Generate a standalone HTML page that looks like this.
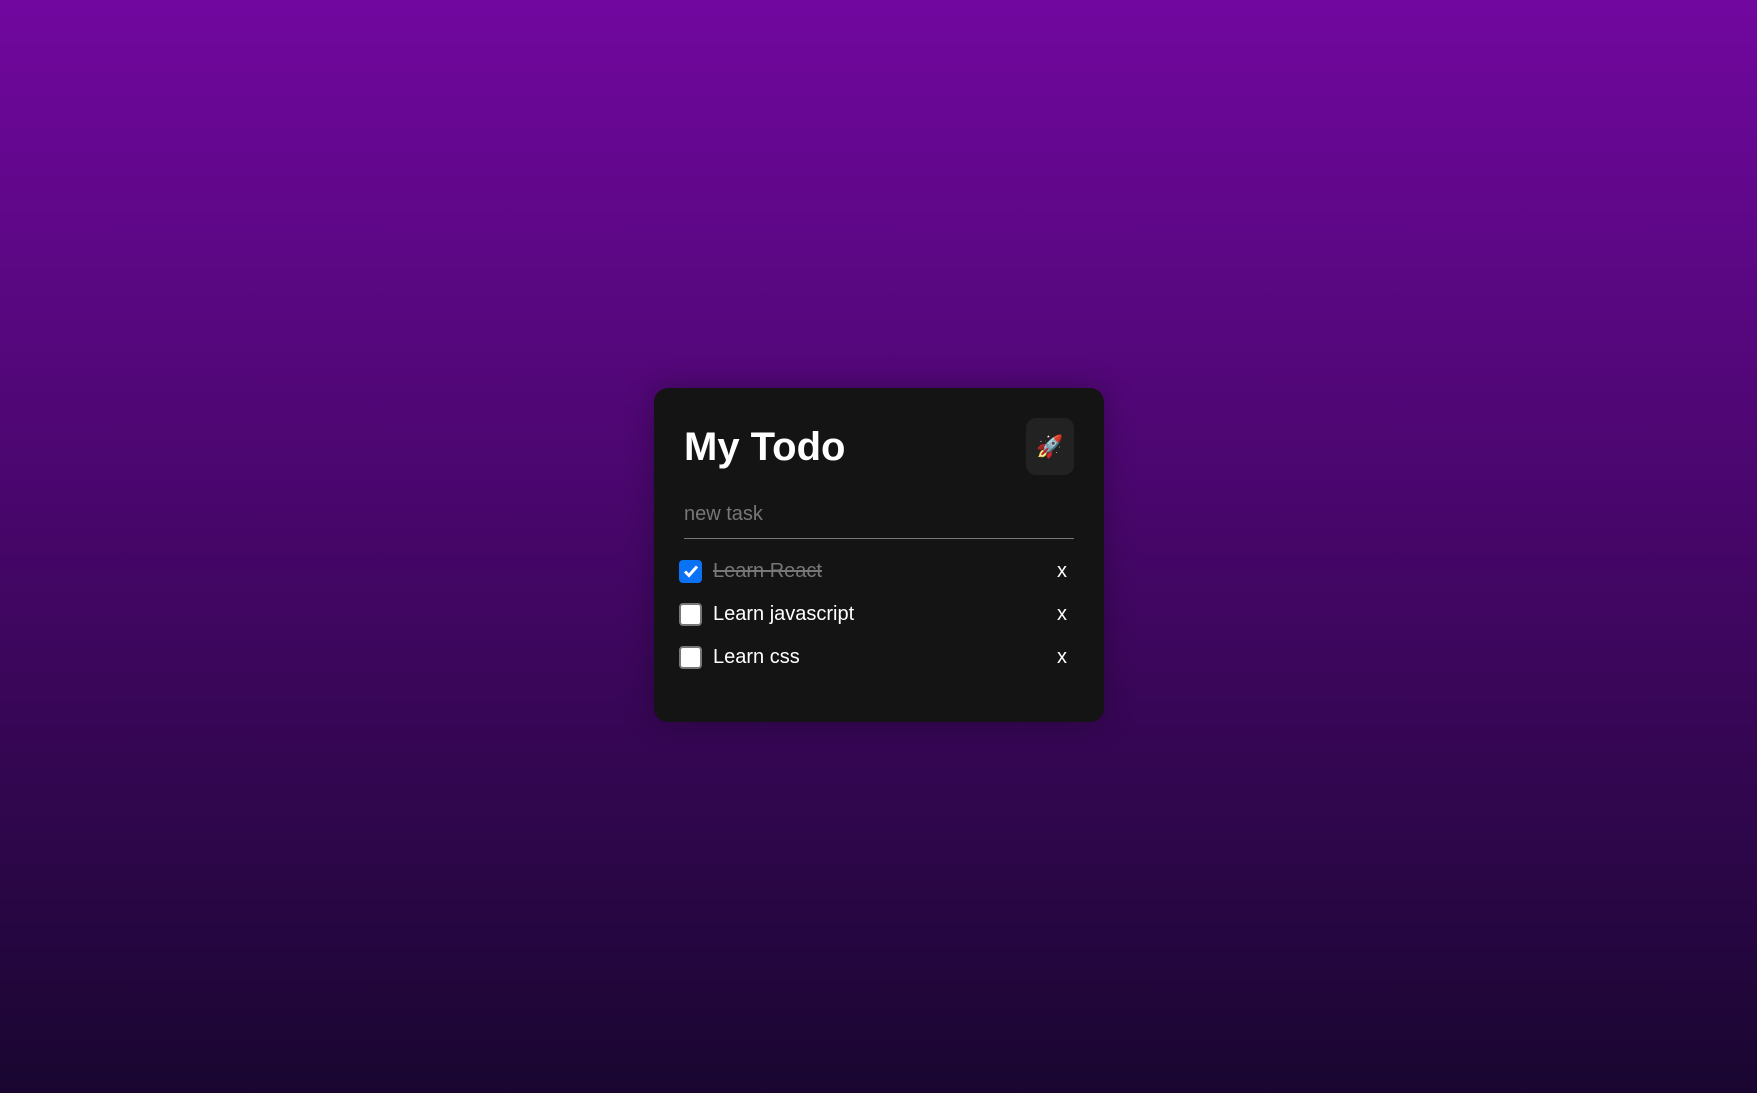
<!DOCTYPE html>
<html><head><meta charset="utf-8"><style>
html,body{margin:0;height:1093px;width:1757px;overflow:hidden}
body{background:linear-gradient(#71079f,#190630);font-family:"Liberation Sans",sans-serif;position:relative}
.card{position:absolute;left:654px;top:388px;width:450px;height:334px;background:#141414;border-radius:14px;box-shadow:0 0 30px rgba(0,0,0,.3)}
h1{position:absolute;left:30px;top:37px;margin:0;font-size:40px;font-weight:bold;color:#fff}
.btn{position:absolute;left:372px;top:30px;width:48px;height:57px;background:#222;border-radius:10px;font-size:22px;display:flex;align-items:center;justify-content:center}
.inp{position:absolute;left:30px;top:115px;width:390px;height:35px;border-bottom:1px solid #777;color:#777;font-size:20px}
.row{position:absolute;left:25px;width:394px;height:30px;display:flex;align-items:center;color:#fff;font-size:20px}
.cb{width:19px;height:19px;border:2px solid #777;background:#fff;border-radius:4px;margin-right:11px;box-sizing:content-box}
.cb.on{background:#0a72f5;border-color:#0a72f5;display:flex;align-items:center;justify-content:center}
.x{margin-left:auto;margin-right:6px}
</style></head><body>
<div class="card">
<h1>My Todo</h1>
<div class="btn">🚀</div>
<div class="inp">new task</div>
<div class="row" style="top:168px"><div class="cb on"><svg width="16" height="16" viewBox="0 0 16 16"><path d="M2 8.5l4 4 8-9" stroke="#fff" stroke-width="3" fill="none"/></svg></div><span style="color:#777;text-decoration:line-through">Learn React</span><span class="x">x</span></div>
<div class="row" style="top:211px"><div class="cb"></div><span>Learn javascript</span><span class="x">x</span></div>
<div class="row" style="top:254px"><div class="cb"></div><span>Learn css</span><span class="x">x</span></div>
</div>
</body></html>
